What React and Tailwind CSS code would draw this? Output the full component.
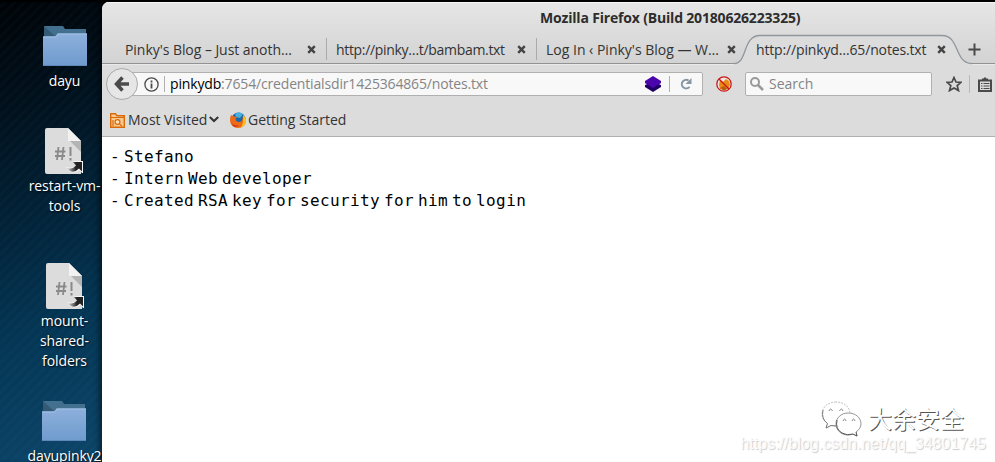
import React from "react";

const CloseIcon = () => (
  <svg className="h-[9px] w-[9px] shrink-0" viewBox="0 0 9 9">
    <path d="M1.2 1.2L7.8 7.8M7.8 1.2L1.2 7.8" stroke="#444" strokeWidth="2.4" />
  </svg>
);

const Folder = ({ id }) => (
  <svg className="block h-[42px] w-[44px]" viewBox="0 0 44 42">
    <defs>
      <linearGradient id={id} x1="0" y1="0" x2="0" y2="1">
        <stop offset="0" stopColor="#8db0dc" />
        <stop offset="1" stopColor="#6f9bcd" />
      </linearGradient>
    </defs>
    <path d="M1 0H20L22 3H43V20H1Z" fill="#44708f" />
    <path d="M1 0L12 10H1Z" fill="#355a76" />
    <path d="M0 10.500H12.500L14.500 7.500H44V40H0Z" fill={`url(#${id})`} />
    <path d="M0 11H12.800L14.800 8H44" fill="none" stroke="#a5c2e6" />
    <path d="M0 39.500H44" stroke="#5f88ba" />
  </svg>
);

const Script = ({ id }) => (
  <svg className="block h-[46px] w-[38px]" viewBox="0 0 38 46">
    <defs>
      <linearGradient id={id} x1="0" y1="0" x2="1" y2="0">
        <stop offset="0.1" stopColor="#bbb" />
        <stop offset="0.6" stopColor="#222" />
      </linearGradient>
    </defs>
    <path d="M2 0H23L36 13V46H2Q0 46 0 44V2Q0 0 2 0Z" fill="#dcdcdc" />
    <path d="M25 13H36V24Z" fill="#b4b4b4" />
    <path d="M23 0L36 13H23Z" fill="#f2f2f2" />
    <path d="M13.500 19L12 32M18.500 19L17 32M10 23.500H20.500M10 28H20" stroke="#8a8a8a" strokeWidth="1.800" />
    <path d="M25.500 19V28M25.500 30V32.500" stroke="#8a8a8a" strokeWidth="2" />
    <path d="M28 33H38V45H37L34.500 42Q30 46 25 43.500Q22 42 21 39Q26 41 30 38L31 36Z" fill="#f5f5f5" />
    <path d="M28 34H37V43.500L34 40.500Q29 45.500 25 43Q23 42 22 40Q27 42 31 37.500Z" fill={`url(#${id})`} />
  </svg>
);

const Label = ({ children }) => (
  <span className="block whitespace-pre text-center text-[14px] leading-5 tracking-[-0.1px] text-white [text-shadow:1px_1px_2px_#000]">{children}</span>
);

export default function App() {
  return (
    <div className="relative flex h-[462px] w-[995px] overflow-hidden bg-black font-['Open_Sans','Noto_Sans',sans-serif] text-[14px] text-[#333]">
      <div className="absolute inset-x-0 top-0 h-[2px] bg-black" />
      <aside className="w-[102px] shrink-0 bg-[linear-gradient(160deg,#000306_0%,#01101b_22%,#021f33_42%,#043553_68%,#0d466a_100%)]">
        <div className="flex h-[462px] flex-col items-center overflow-hidden bg-[repeating-linear-gradient(135deg,transparent_0_3px,rgba(80,160,210,0.03)_4px_6px,transparent_7px)] pl-[27px] pt-[26px] shadow-[inset_-6px_0_6px_-4px_rgba(0,0,0,0.6)]">
          <div className="flex h-[102px] shrink-0 flex-col items-center gap-[3px]">
            <Folder id="f1" />
            <Label>dayu</Label>
          </div>
          <div className="flex h-[135px] shrink-0 flex-col items-center gap-[2px]">
            <Script id="s1" />
            <Label>{"restart-vm-\ntools"}</Label>
          </div>
          <div className="flex h-[138px] shrink-0 flex-col items-center gap-[2px]">
            <Script id="s2" />
            <Label>{"mount-\nshared-\nfolders"}</Label>
          </div>
          <div className="flex shrink-0 flex-col items-center gap-[3px]">
            <Folder id="f2" />
            <Label>dayupinky2</Label>
          </div>
        </div>
      </aside>

      <div className="flex w-[893px] shrink-0">
        <main className="mt-[2px] flex h-[460px] w-[893px] shrink-0 flex-col overflow-hidden rounded-tl-[7px] bg-white">
          <div className="flex h-[62px] shrink-0 flex-col border-b border-[#929292] bg-gradient-to-b from-[#e6e6e6] to-[#d3d3d3]">
            <div className="h-[33px] border-t border-[#f7f7f7] pl-[438px] text-[14px] font-bold leading-[30px] text-[#2d2d2d]">
              <span className="whitespace-nowrap tracking-[-0.18px]">Mozilla Firefox (Build 20180626223325)</span>
            </div>
            <div className="flex h-[28px] items-center">
              <div className="flex h-[22px] w-[225px] shrink-0 items-center border-r border-[#aaa] pl-[23px]">
                <span className="w-[182px] whitespace-nowrap tracking-[-0.05px]">Pinky's Blog – Just anoth…</span>
                <CloseIcon />
              </div>
              <div className="flex h-[22px] w-[210px] shrink-0 items-center border-r border-[#aaa] pl-[9px]">
                <span className="w-[181px] whitespace-nowrap tracking-[-0.32px]">http://pinky…t/bambam.txt</span>
                <CloseIcon />
              </div>
              <div className="flex h-[22px] w-[201px] shrink-0 items-center pl-[9px]">
                <span className="w-[181px] whitespace-nowrap">Log In ‹ Pinky's Blog — W…</span>
                <CloseIcon />
              </div>
              <div className="relative flex h-[30px] w-[230px] shrink-0 items-center pl-[18px]">
                <svg className="absolute left-[-4px] top-0 h-[31px] w-[238px]" viewBox="0 0 238 31">
                  <path d="M0 29.500C14 29.500 8 1.500 26 1.500H208C226 1.500 220 29.500 238 29.500V31H0Z" fill="#dcdcdc" />
                  <path d="M0 29.500C14 29.500 8 1.500 26 1.500H208C226 1.500 220 29.500 238 29.500" fill="none" stroke="#90979c" strokeWidth="1.300" />
                </svg>
                <span className="relative w-[181px] whitespace-nowrap tracking-[-0.15px]">http://pinkyd…65/notes.txt</span>
                <span className="relative"><CloseIcon /></span>
              </div>
              <svg className="h-[13px] w-[13px] shrink-0" viewBox="0 0 13 13">
                <path d="M6.500 0.500V12.500M0.500 6.500H12.500" stroke="#4a4a4a" strokeWidth="2" />
              </svg>
            </div>
          </div>

          <div className="flex h-[39px] shrink-0 items-center border-t border-[#e9e9e9] bg-[#dcdcdc] pl-1">
            <div className="z-10 flex h-8 w-8 shrink-0 items-center justify-center rounded-full border border-[#aaa] bg-[#e6e6e6]">
              <svg className="h-[16px] w-[16px]" viewBox="0 0 16 16">
                <path d="M8.500 1.500L2.500 8L8.500 14.500M3 8H15" fill="none" stroke="#4a4a4a" strokeWidth="3.500" />
              </svg>
            </div>
            <div className="-ml-2 flex h-6 w-[573px] shrink-0 items-center rounded-[2px] border border-[#b0b0b0] bg-[#f8f8f8] pl-[13px]">
              <svg className="h-[15px] w-[15px] shrink-0" viewBox="0 0 15 15">
                <circle cx="7.500" cy="7.500" r="6.600" fill="none" stroke="#4a4a4a" strokeWidth="1.300" />
                <path d="M7.500 6.500V11.500M7.500 3.500V5.500" stroke="#4a4a4a" strokeWidth="1.800" />
              </svg>
              <span className="ml-[5px] h-4 w-px bg-[#b0b0b0]" />
              <span className="-mt-px ml-[5px] w-[475px] whitespace-nowrap tracking-[-0.16px] text-[#858585]"><span className="text-black">pinkydb</span>:7654/credentialsdir1425364865/notes.txt</span>
              <svg className="h-[16px] w-[16px] shrink-0" viewBox="0 0 16 16">
                <path d="M0 6L8 1.500L16 6V11L8 16L0 11Z" fill="#200064" />
                <path d="M8 0L16 5V7L8 12L0 7V5Z" fill="#4b05ad" />
                <path d="M0 7V9L2 8.200ZM16 7V9L14 8.200Z" fill="#f8f8f8" />
              </svg>
              <span className="ml-[8px] h-4 w-px bg-[#b0b0b0]" />
              <svg className="ml-[10px] h-[12px] w-[12px] shrink-0" viewBox="0 0 12 12">
                <path d="M8.500 2.500A4.300 4.300 0 1 0 9.500 8.800" fill="none" stroke="#8796a3" strokeWidth="2" />
                <path d="M11.500 0V6H5.500Z" fill="#8796a3" />
              </svg>
            </div>
            <svg className="ml-[13px] h-[16px] w-[16px] shrink-0" viewBox="0 0 16 16">
              <circle cx="8" cy="8" r="7.200" fill="#ece7e2" />
              <path d="M3 9L4 4L7 6L10 3L13 5L14 9L12 13L8 14L4 13Z" fill="#e98a16" />
              <path d="M4 12L8 10L11 13L8 14.500Z" fill="#b45a13" />
              <circle cx="8" cy="8" r="7.200" fill="none" stroke="#cc1717" strokeWidth="1.300" />
              <path d="M3 3L13 13" stroke="#cc1717" strokeWidth="1.400" />
            </svg>
            <div className="ml-[13px] flex h-6 w-[187px] shrink-0 items-center rounded-[2px] border border-[#b0b0b0] bg-[#f8f8f8] pl-1">
              <svg className="h-[14px] w-[14px] shrink-0" viewBox="0 0 14 14">
                <circle cx="5" cy="5" r="4" fill="none" stroke="#999" strokeWidth="2" />
                <path d="M8 8L13 13" stroke="#999" strokeWidth="2.500" />
              </svg>
              <span className="-mt-px ml-[5px] text-[#858585]">Search</span>
            </div>
            <svg className="ml-[14px] h-[16px] w-[16px] shrink-0" viewBox="0 0 16 16">
              <path d="M8 1.500L10 6L15 6.300L11.200 9.600L12.500 14.600L8 12L3.500 14.600L4.800 9.600L1 6.300L6 6Z" fill="none" stroke="#4a4a4a" strokeWidth="1.700" />
            </svg>
            <span className="ml-[7px] h-[18px] w-px shrink-0 bg-[#b8b8b8]" />
            <svg className="ml-[8px] h-[15px] w-[14px] shrink-0" viewBox="0 0 14 15">
              <path d="M1 3.500H13V14H1Z" fill="none" stroke="#4a4a4a" strokeWidth="2" />
              <path d="M4 3V1.500H5.500L7 0L8.500 1.500H10V3Z" fill="#4a4a4a" />
              <path d="M3 6.500H4.500M5.500 6.500H11.500M3 9H4.500M5.500 9H11.500M3 11.500H4.500M5.500 11.500H11.500" stroke="#4a4a4a" strokeWidth="1.200" />
            </svg>
          </div>

          <div className="flex h-[34px] shrink-0 items-center border-b border-[#b0b0b0] bg-[#dcdcdc] pl-2">
            <svg className="mt-px h-[15px] w-[15px] shrink-0" viewBox="0 0 15 15">
              <path d="M0.700 14.300V0.700H5.500L7 2.700H14.300V14.300Z" fill="#f7c98f" stroke="#d96b0b" strokeWidth="1.400" />
              <path d="M1 4.500H14" stroke="#d96b0b" />
              <circle cx="7.500" cy="9" r="2.400" fill="#fbe3c4" stroke="#d96b0b" strokeWidth="1.200" />
              <path d="M9.500 10.800L12 13.300M3 13V7" stroke="#d96b0b" strokeWidth="1.200" />
            </svg>
            <span className="-mt-px ml-[3px] w-[81px] whitespace-nowrap tracking-[-0.05px]">Most Visited</span>
            <svg className="h-[7px] w-[10px] shrink-0" viewBox="0 0 10 7">
              <path d="M0.800 1L5 5L9.200 1" fill="none" stroke="#333" strokeWidth="2" />
            </svg>
            <svg className="ml-[11px] h-[16px] w-[16px] shrink-0" viewBox="0 0 16 16">
              <circle cx="8.500" cy="7.500" r="7" fill="#1769ac" />
              <path d="M5 2Q9-1 13 2L10 6L6 5Z" fill="#49b0df" />
              <path d="M1 3L4 4.500L7 5L5.500 7Q6 10 9 10Q12 10 12.500 7L13 3Q16 5 16 9Q15 16 8 16Q1 15.500 0 9Q0 5 1 3Z" fill="#ee6a16" />
              <path d="M13 3Q16 5 16 9Q15 14 11 15.500Q14 11 13 3Z" fill="#ffc51b" />
              <path d="M1 10Q3 14 9 13.500Q6 16 3 14Z" fill="#cf3919" />
            </svg>
            <span className="-mt-px ml-[2px] whitespace-nowrap tracking-[-0.05px]">Getting Started</span>
          </div>

          <div className="flex grow flex-col justify-between bg-white pl-2 pr-[9px] pt-[9px]">
            <pre className="font-['DejaVu_Sans_Mono',monospace] text-[16px] leading-[22px] tracking-[0.37px] text-black [word-spacing:-6px]">{`- Stefano
- Intern Web developer
- Created RSA key for security for him to login`}</pre>
            <div className="flex flex-col items-end pb-[11px]">
              <div className="mr-[22px] flex h-[35px] items-center">
                <svg className="mr-[5px] h-[36px] w-[42px]" viewBox="0 0 42 36">
                  <g fill="white">
                    <path d="M15 1C7 1 1 6.500 1 13C1 17 3 20 6.500 22.500L5 27L10 24.500Q13 25.500 17 25C25 24 29 19 29 13C29 6 23 1 15 1Z" stroke="#bbb" strokeWidth="0.900" strokeDasharray="2 1" />
                    <path d="M2 9Q0 18 6.500 22.500L5 27L10 24.500L16 25" stroke="#777" strokeWidth="1" />
                    <path d="M27 12C20 12 15 17 15 23C15 29 20 34 27 34Q30 34 32 33L36 35L35 31C38 29 40 26 40 23C40 17 35 12 27 12Z" stroke="#888" strokeWidth="0.900" />
                    <path d="M16 19Q14 28 21 32Q26 35 32 33L36 35L35 31" stroke="#555" strokeWidth="1" />
                  </g>
                  <path d="M8 10Q9.500 6 11.500 10M18.500 10Q20.500 6 22 10M22 20Q23.500 16 25 20M31 20Q32.500 16 34 20" fill="none" stroke="#888" />
                </svg>
                <span className="-mt-[2px] font-['Noto_Sans_CJK_SC',sans-serif] text-[24px] leading-9 text-white [text-shadow:1px_1px_0_#555]">大余安全</span>
              </div>
              <span className="font-['Liberation_Sans',sans-serif] text-[16px] leading-[15px] text-[#fbfbfb] [text-shadow:1px_1px_1px_#ccc]">https://blog.csdn.net/qq_34801745</span>
            </div>
          </div>
        </main>
      </div>
    </div>
  );
}
